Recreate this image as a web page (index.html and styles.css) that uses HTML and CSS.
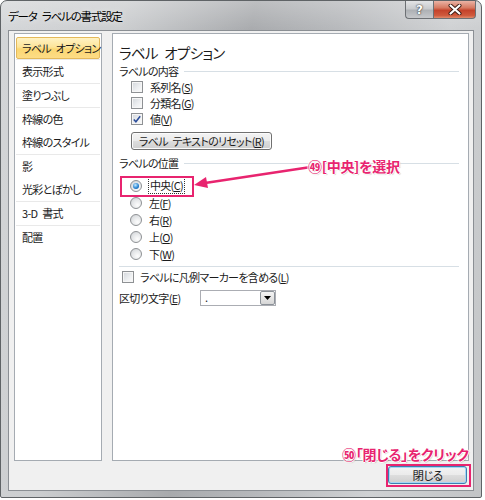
FILE: index.html
```html
<!DOCTYPE html>
<html lang="ja">
<head>
<meta charset="utf-8">
<title>データ ラベルの書式設定</title>
<link rel="stylesheet" href="styles.css">
</head>
<body>
<div class="window">
  <div class="titlebar">
    <span class="title">データ ラベルの書式設定</span>
    <div class="caption-btns">
      <span class="cap-help">?</span>
      <span class="cap-close">
        <svg width="14" height="11" viewBox="0 0 14 11"><path d="M2.5 1.5 L11.5 9.5 M11.5 1.5 L2.5 9.5" stroke="#3a1a12" stroke-width="4" stroke-linecap="round"/><path d="M2.5 1.5 L11.5 9.5 M11.5 1.5 L2.5 9.5" stroke="#ffffff" stroke-width="2.2" stroke-linecap="round"/></svg>
      </span>
    </div>
  </div>
  <div class="body">
    <div class="main">
      <div class="nav">
        <div class="group"><div class="item selected">ラベル オプション</div></div>
        <div class="group"><div class="item">表示形式</div></div>
        <div class="group"><div class="item">塗りつぶし</div></div>
        <div class="group"><div class="item">枠線の色</div><div class="item">枠線のスタイル</div></div>
        <div class="group"><div class="item">影</div><div class="item">光彩とぼかし</div></div>
        <div class="group"><div class="item">3-D 書式</div></div>
        <div class="group last"><div class="item">配置</div></div>
      </div>
      <div class="panel">
        <div class="heading">ラベル オプション</div>
        <div class="section"><span>ラベルの内容</span><span class="rule"></span></div>
        <div class="check-row"><span class="cb"></span><span>系列名(<u>S</u>)</span></div>
        <div class="check-row"><span class="cb"></span><span>分類名(<u>G</u>)</span></div>
        <div class="check-row"><span class="cb"><svg width="11" height="11" viewBox="0 0 11 11"><path d="M2 5.5 L4.3 8 L9 2" fill="none" stroke="#2b4d9a" stroke-width="1.7"/></svg></span><span>値(<u>V</u>)</span></div>
        <div class="reset-btn">ラベル テキストのリセット(<u>R</u>)</div>
        <div class="section pos"><span>ラベルの位置</span><span class="rule"></span></div>
        <div class="radio-row"><span class="rb on"></span><span class="focus">中央(<u>C</u>)</span></div>
        <div class="radio-row"><span class="rb"></span><span>左(<u>F</u>)</span></div>
        <div class="radio-row"><span class="rb"></span><span>右(<u>R</u>)</span></div>
        <div class="radio-row"><span class="rb"></span><span>上(<u>O</u>)</span></div>
        <div class="radio-row"><span class="rb"></span><span>下(<u>W</u>)</span></div>
        <div class="hr"></div>
        <div class="check-row legend"><span class="cb"></span><span>ラベルに凡例マーカーを含める(<u>L</u>)</span></div>
        <div class="delim-row">
          <span class="delim-label">区切り文字(<u>E</u>)</span>
          <span class="combo"><span class="combo-text">.</span><span class="combo-btn"><svg width="7" height="4" viewBox="0 0 7 4"><path d="M0 0 H7 L3.5 4 Z" fill="#000"/></svg></span></span>
        </div>
      </div>
    </div>
    <div class="footer">
      <div class="close-btn">閉じる</div>
    </div>
  </div>

  <div class="mark-center"></div>
  <svg class="arrow" width="125" height="36" viewBox="0 0 125 36">
    <path d="M120 6 L14 22" stroke="#e8246f" stroke-width="2.6" stroke-linecap="round"/>
    <path d="M3 24 L15 16 L17 27 Z" fill="#e8246f"/>
  </svg>
  <div class="note note49">㊾[中央]を選択</div>
  <div class="note note50">㊿「閉じる」をクリック</div>
  <div class="mark-close"></div>
</div>
</body>
</html>
```
FILE: styles.css
```css
* { box-sizing: border-box; }

body {
  margin: 0;
  background: #ffffff;
  font-family: "Noto Sans CJK JP", "Noto Sans", sans-serif;
  font-size: 11px;
  letter-spacing: -0.7px;
  word-spacing: 3px;
  color: #1b1b1b;
  font-feature-settings: "palt";
}

.window {
  position: relative;
  width: 482px;
  height: 498px;
  border: 1px solid #5f6366;
  border-radius: 7px 7px 2px 2px;
  background:
    linear-gradient(180deg, rgba(255,255,255,0.25) 0px, rgba(255,255,255,0) 30px),
    linear-gradient(100deg, #d4d6d8 0%, #cbcdcf 22%, #a8aaad 45%, #b6b8bb 60%, #cfd1d3 80%, #c2c4c6 100%);
  display: flex;
  flex-direction: column;
  padding: 0 7px 6px 7px;
}

.titlebar {
  height: 29px;
  display: flex;
  align-items: flex-start;
}

.title {
  margin-top: 7px;
  font-size: 11.5px;
  letter-spacing: -1.2px;
  word-spacing: 4px;
  line-height: 16px;
  color: #000;
  text-shadow: 0 0 6px rgba(255,255,255,0.7);
}

.caption-btns {
  margin-left: auto;
  margin-right: -2px;
  display: flex;
}

.cap-help, .cap-close {
  height: 18px;
  display: flex;
  align-items: center;
  justify-content: center;
  border: 1px solid #6d7074;
  border-top: none;
}

.cap-help {
  width: 28px;
  border-radius: 0 0 0 4px;
  border-right: none;
  background: linear-gradient(180deg, #e3e4e6 0%, #c9cbce 45%, #aeb1b5 55%, #c6c8cb 100%);
  color: #fff;
  font-family: "DejaVu Sans", sans-serif;
  font-weight: bold;
  font-size: 12px;
  letter-spacing: 0;
  text-shadow: 0 0 2px #333, 0 0 1px #333;
}

.cap-close {
  width: 43px;
  border-radius: 0 0 4px 0;
  background: linear-gradient(180deg, #eab3a5 0%, #d67a62 40%, #c4432b 55%, #d05a3d 85%, #e08b6c 100%);
}

.body {
  flex: 1;
  background: #f0f0f0;
  border: 1px solid #8b8f94;
  display: flex;
  flex-direction: column;
  padding: 2px 4px 0 5px;
}

.main {
  height: 428px;
  display: flex;
  gap: 10px;
}

.nav {
  width: 88px;
  background: #fff;
  border: 1px solid #a5abb2;
  padding: 3px 1px;
}

.group {
  border-bottom: 1px solid #e9e9e9;
}
.group.last { border-bottom: none; }

.item {
  height: 23px;
  line-height: 23px;
  padding-left: 6px;
  white-space: nowrap;
}

.item.selected {
  height: 22px;
  line-height: 20px;
  padding-left: 5px;
  border: 1px solid #e4b95a;
  border-radius: 2px;
  background: linear-gradient(180deg, #fff2c4 0%, #fde59a 45%, #fbd772 55%, #fddc86 100%);
}

.panel {
  flex: 1;
  background: #fff;
  border: 1px solid #a5abb2;
  padding: 10px 9px 0 6px;
  display: flex;
  flex-direction: column;
}

.heading {
  font-size: 14.5px;
  letter-spacing: -0.7px;
  word-spacing: 4px;
  line-height: 18px;
  color: #1b1b1b;
}

.section {
  margin-top: 1px;
  height: 16px;
  line-height: 16px;
  display: flex;
  align-items: center;
  gap: 6px;
}
.section.pos { margin-top: 5px; }

.rule {
  flex: 1;
  height: 1px;
  background: #d7dfe5;
}

.check-row {
  margin-left: 12px;
  height: 16px;
  line-height: 16px;
  display: flex;
  align-items: center;
  gap: 7px;
}

.cb {
  width: 12px;
  height: 12px;
  border: 1px solid #8e9194;
  background: linear-gradient(135deg, #d2d6db 0%, #eef0f2 60%, #fbfbfb 100%);
  box-shadow: inset 0 0 0 1px #f6f6f6;
  display: flex;
  align-items: center;
  justify-content: center;
}

.reset-btn {
  margin: 5px 0 0 12px;
  width: 141px;
  height: 18px;
  line-height: 16px;
  text-align: center;
  white-space: nowrap;
  border: 1px solid #707070;
  border-radius: 3px;
  background: linear-gradient(180deg, #f3f3f3 0%, #ebebeb 48%, #dddddd 52%, #cfcfcf 100%);
  box-shadow: inset 0 0 0 1px #fbfbfb;
}

.radio-row {
  margin-left: 11px;
  height: 17px;
  display: flex;
  align-items: center;
  gap: 7px;
}
.section.pos + .radio-row { margin-top: 6px; }

.rb {
  width: 12px;
  height: 12px;
  border-radius: 50%;
  border: 1px solid #8e9194;
  background: radial-gradient(circle at 65% 70%, #fdfdfd 0%, #e4e6e8 55%, #c9ccd0 100%);
  display: flex;
  align-items: center;
  justify-content: center;
}
.rb.on::after {
  content: "";
  width: 6px;
  height: 6px;
  border-radius: 50%;
  background: radial-gradient(circle at 40% 35%, #c8ecff 0%, #2a86d4 55%, #0d4d91 100%);
}

.focus {
  outline: 1px dotted #333;
  outline-offset: 0;
  padding: 0 1px;
  line-height: 15px;
}

.hr {
  margin-top: 4px;
  height: 1px;
  background: #d7dfe5;
}

.check-row.legend {
  margin-left: 3px;
  margin-top: 2px;
  gap: 6px;
}

.delim-row {
  margin-top: 4px;
  height: 18px;
  display: flex;
  align-items: center;
}

.delim-label { width: 81px; }

.combo {
  width: 76px;
  height: 16px;
  border: 1px solid #abadb3;
  background: #fff;
  display: flex;
  align-items: stretch;
}

.combo-text {
  flex: 1;
  padding-left: 4px;
  line-height: 12px;
}

.combo-btn {
  width: 15px;
  border: 1px solid #8c9299;
  border-radius: 2px;
  background: linear-gradient(180deg, #f4f4f4 0%, #e6e6e6 50%, #d6d6d6 100%);
  display: flex;
  align-items: center;
  justify-content: center;
}

.footer {
  display: flex;
  justify-content: flex-end;
  padding: 5px 2px 0 0;
}

.close-btn {
  width: 79px;
  height: 18px;
  line-height: 16px;
  text-align: center;
  font-size: 11.5px;
  border: 1px solid #3c7fb1;
  border-radius: 3px;
  background: linear-gradient(180deg, #f3f3f3 0%, #ebebeb 48%, #dddddd 52%, #cfcfcf 100%);
  box-shadow: inset 0 0 0 1px #a5d6f5;
}

.mark-center {
  position: absolute;
  left: 119px;
  top: 175px;
  width: 74px;
  height: 21px;
  border: 2px solid #e8246f;
}

.mark-close {
  position: absolute;
  left: 385px;
  top: 463px;
  width: 85px;
  height: 23px;
  border: 2px solid #e8246f;
}

.arrow {
  position: absolute;
  left: 190px;
  top: 160px;
}

.note {
  position: absolute;
  color: #e8246f;
  font-weight: bold;
  font-size: 14px;
  letter-spacing: -0.3px;
  word-spacing: 0;
  line-height: 16px;
  white-space: nowrap;
  text-shadow: 1px 0 0 #fff, -1px 0 0 #fff, 0 1px 0 #fff, 0 -1px 0 #fff, 1px 1px 1px rgba(0,0,0,0.25);
}

.note49 { left: 307px; top: 157px; }
.note50 { left: 341px; top: 445px; }
```
